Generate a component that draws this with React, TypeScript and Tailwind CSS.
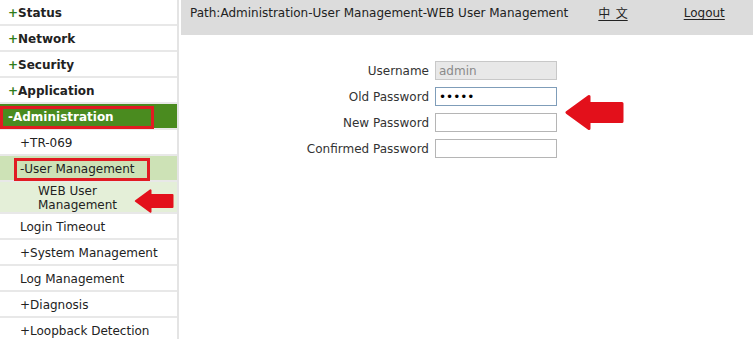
import React from "react";

type MenuItem = {
	label: string;
	level: 0 | 1 | 2;
	bold?: boolean;
	prefix?: string;
	tone?: "dark" | "mid" | "light";
	marked?: boolean;
};

const menu: MenuItem[] = [
	{ label: "Status", level: 0, bold: true, prefix: "+" },
	{ label: "Network", level: 0, bold: true, prefix: "+" },
	{ label: "Security", level: 0, bold: true, prefix: "+" },
	{ label: "Application", level: 0, bold: true, prefix: "+" },
	{ label: "-Administration", level: 0, bold: true, tone: "dark", marked: true },
	{ label: "+TR-069", level: 1 },
	{ label: "-User Management", level: 1, tone: "mid", marked: true },
	{ label: "WEB User Management", level: 2, tone: "light" },
	{ label: "Login Timeout", level: 1 },
	{ label: "+System Management", level: 1 },
	{ label: "Log Management", level: 1 },
	{ label: "+Diagnosis", level: 1 },
	{ label: "+Loopback Detection", level: 1 },
];

const LeftArrow: React.FC<{ className?: string }> = ({ className }) => (
	<svg viewBox="0 0 60 36" className={className}>
		<path
			d="M2 18 L24 2 L24 9 L57 9 L57 27 L24 27 L24 34 Z"
			fill="#e3101b"
			stroke="#e3101b"
			strokeWidth="3"
			strokeLinejoin="round"
		/>
	</svg>
);

const SideMenu: React.FC = () => (
	<div className="w-[179px] shrink-0 border-r-2 border-[#e4e4e4] bg-white">
		{menu.map((item) => {
			const bg =
				item.tone === "dark"
					? "bg-[#4a8b1f]"
					: item.tone === "mid"
						? "bg-[#cde2b6]"
						: item.tone === "light"
							? "bg-[#e4efd8]"
							: "bg-white";
			const pad = item.level === 0 ? "pl-[8px]" : item.level === 1 ? "pl-[20px]" : "pl-[38px]";
			const height = item.level === 2 ? "h-[32px]" : "h-[26px]";
			return (
				<div
					key={item.label}
					className={`relative flex items-center pt-[1px] ${height} ${bg} ${pad} border-b-2 border-[#e8e8e8]`}
				>
					{item.marked && (
						<div
							className={`absolute top-[2px] bottom-[-1px] border-[3px] border-[#e11b22] ${
								item.level === 0 ? "left-0 w-[154px]" : "left-[14px] w-[136px]"
							}`}
						/>
					)}
					{item.level === 2 ? (
						<span className="w-[90px] text-[12px] leading-[14px] text-[#222]">{item.label}</span>
					) : (
						<span
							className={`${
								item.bold ? "text-[12px] font-bold" : "text-[12px]"
							} ${item.tone === "dark" ? "text-white" : "text-[#222]"}`}
						>
							{item.prefix && <span className="text-[#2f7d1a]">{item.prefix}</span>}
							{item.label}
						</span>
					)}
					{item.level === 2 && <LeftArrow className="absolute left-[128px] top-[7px] w-[53px] h-[24px]" />}
				</div>
			);
		})}
	</div>
);

const fields = [
	{ label: "Username", value: "admin", disabled: true },
	{ label: "Old Password", value: "•••••", focused: true },
	{ label: "New Password", value: "" },
	{ label: "Confirmed Password", value: "" },
];

export default function App() {
	return (
		<div
			className="flex h-[339px] w-[753px] overflow-hidden bg-white text-[#222]"
			style={{ fontFamily: '"DejaVu Sans", Verdana, sans-serif' }}
		>
			<SideMenu />
			<div className="relative flex-1 pl-[2px]">
				<div className="flex h-[35px] items-center bg-[#dcdcdc] pb-[9px] text-[12px]">
					<span className="pl-[9px]">Path:Administration-User Management-WEB User Management</span>
					<a
						className="ml-[30px] underline underline-offset-2"
						style={{ fontFamily: '"Noto Sans CJK SC", sans-serif' }}
					>
						中&nbsp;&nbsp;文
					</a>
					<a className="ml-[56px] underline underline-offset-2">Logout</a>
				</div>
				<div className="mt-[26px] grid grid-cols-[248px_122px] gap-x-[6px] gap-y-[7px]">
					{fields.map((f) => (
						<React.Fragment key={f.label}>
							<div className="flex h-[19px] items-center justify-end text-[12px] text-[#333]">{f.label}</div>
							<div
								className={`flex h-[19px] items-center border px-[3px] text-[12px] ${
									f.disabled
										? "border-[#c8c8c8] bg-[#e8e8e8] text-[#8a8a8a]"
										: f.focused
											? "border-[#7f9db9] bg-white text-black"
											: "border-[#b5b5b5] bg-white"
								}`}
							>
								{f.value}
							</div>
						</React.Fragment>
					))}
				</div>
				<LeftArrow className="absolute left-[386px] top-[94px] w-[60px] h-[37px]" />
			</div>
		</div>
	);
}
